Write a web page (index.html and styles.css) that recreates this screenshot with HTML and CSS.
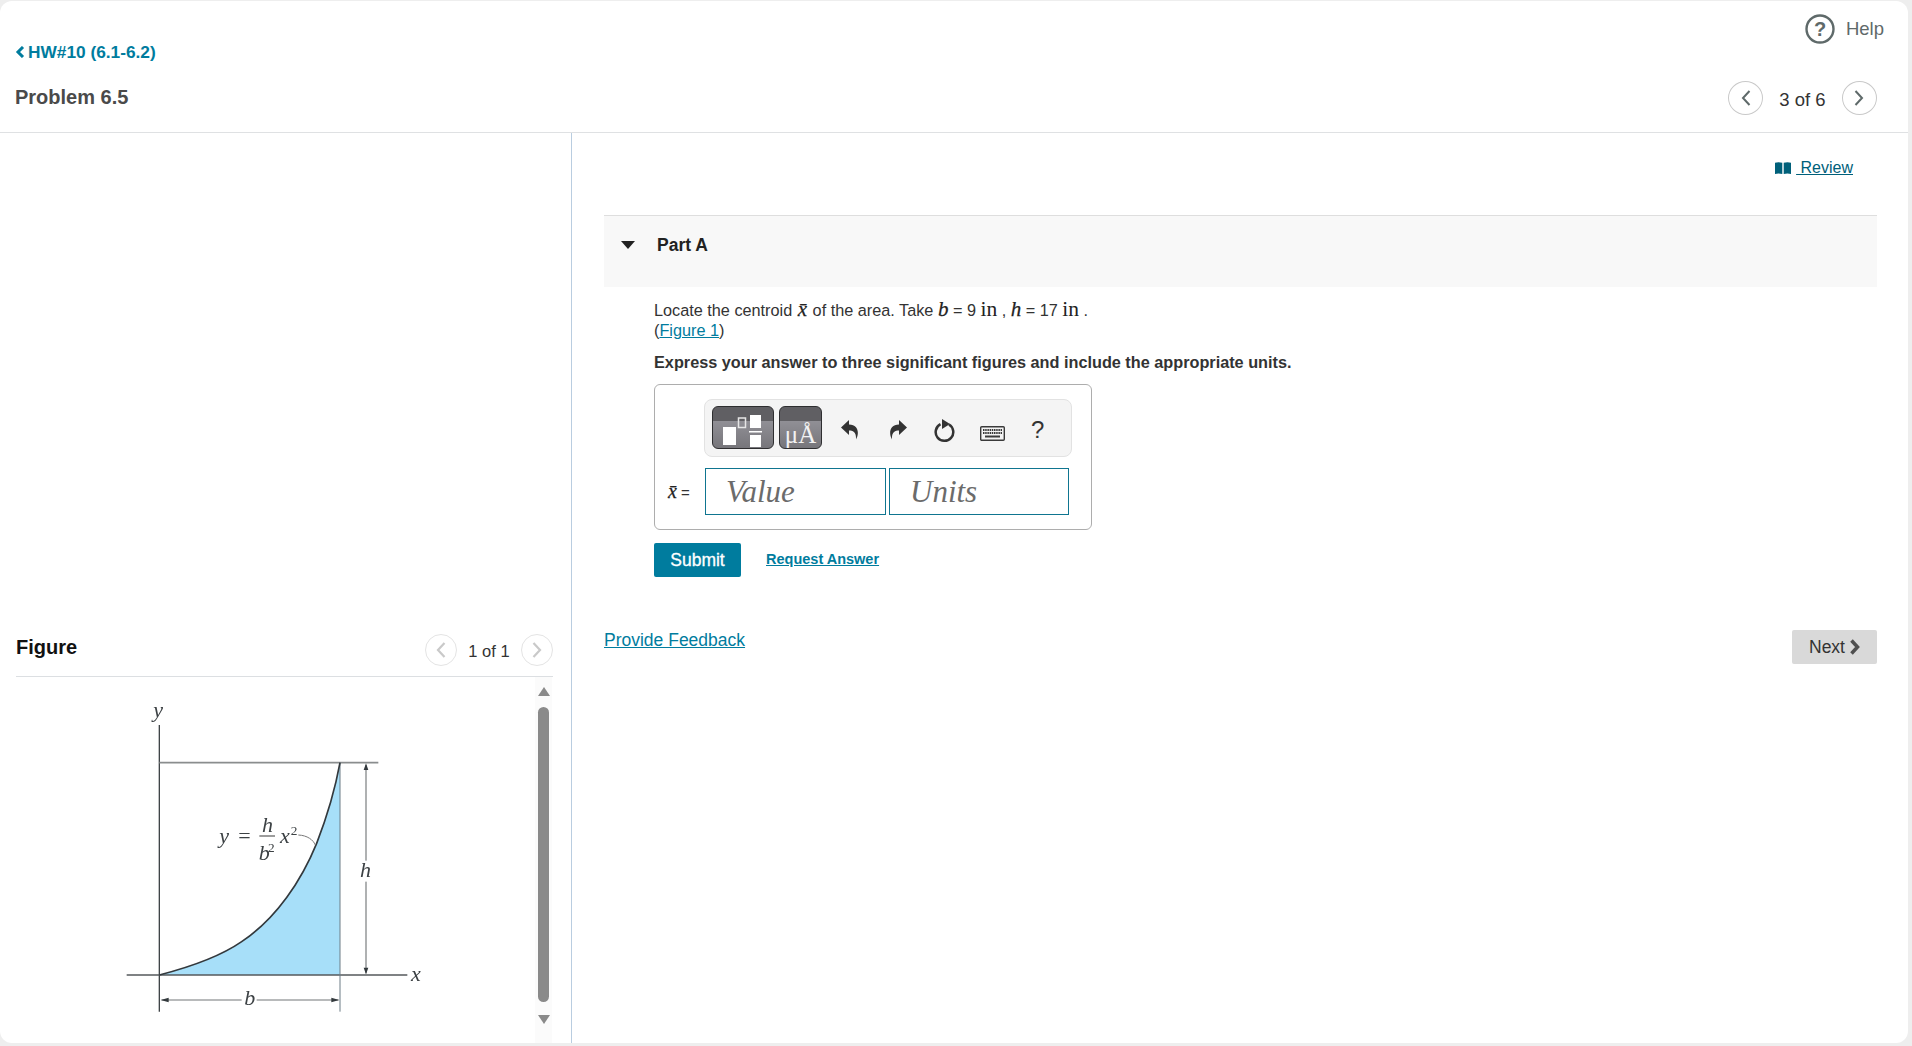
FILE: index.html
```html
<!DOCTYPE html>
<html lang="en">
<head>
<meta charset="utf-8">
<title>Problem 6.5</title>
<link rel="stylesheet" href="styles.css">
</head>
<body>
<main class="card">
  <header class="top">
    <div class="top-left">
      <a class="back" href="#"><svg class="back-chev" viewBox="0 0 10 12"><path d="M8 1 3 6l5 5" fill="none" stroke="currentColor" stroke-width="3"/></svg>HW#10 (6.1-6.2)</a>
      <h1 class="title">Problem 6.5</h1>
    </div>
    <div class="top-right">
      <a class="help" href="#"><svg class="help-icon" viewBox="0 0 30 30"><circle cx="15" cy="15" r="13.500" fill="none" stroke="#5f6a6a" stroke-width="2.400"/><text x="15" y="22" text-anchor="middle" class="help-q">?</text></svg><span>Help</span></a>
      <div class="pager main-pager">
        <button class="circle"><svg viewBox="0 0 12 18"><path d="M9.500 2 3 9l6.500 7" fill="none" stroke="#5f6a6a" stroke-width="2"/></svg></button>
        <span class="count">3 of 6</span>
        <button class="circle"><svg viewBox="0 0 12 18"><path d="M2.500 2 9 9l-6.500 7" fill="none" stroke="#5f6a6a" stroke-width="2"/></svg></button>
      </div>
    </div>
  </header>
  <div class="panes">
    <aside class="left">
      <div class="fig-head">
        <h2 class="fig-title">Figure</h2>
        <div class="pager fig-pager">
          <button class="circle dim"><svg viewBox="0 0 12 18"><path d="M9.500 2 3 9l6.500 7" fill="none" stroke="#c9c9c9" stroke-width="2.200"/></svg></button>
          <span class="count small">1 of 1</span>
          <button class="circle dim"><svg viewBox="0 0 12 18"><path d="M2.500 2 9 9l-6.500 7" fill="none" stroke="#c9c9c9" stroke-width="2.200"/></svg></button>
        </div>
      </div>
      <div class="fig-body">
        <svg class="diagram" viewBox="0 -30 960 990">
          <path d="M118 825C215 800 300 770 365 725 470 655 545 540 590 430 625 340 645 270 660 188V825Z" fill="#a7dff9"/>
          <g fill="none">
            <path d="M118 75V935" stroke="#3f4447" stroke-width="4"/>
            <path d="M118 188H775" stroke="#8a8d8e" stroke-width="5"/>
            <path d="M20 825H862" stroke="#55595b" stroke-width="5"/>
            <path d="M660 188V935" stroke="#6d7c86" stroke-width="3"/>
            <path d="M118 825C215 800 300 770 365 725 470 655 545 540 590 430 625 340 645 270 660 188" stroke="#33393d" stroke-width="5"/>
            <path d="M738 195V482M738 545V820" stroke="#3f4447" stroke-width="2.500"/>
            <path d="M125 900H365M410 900H655" stroke="#55595b" stroke-width="2.500"/>
            <path d="M535 405C562 406 580 420 586 435" stroke="#777" stroke-width="3"/>
            <path d="M418 408H465" stroke="#555" stroke-width="3.500"/>
          </g>
          <path d="M738 190 731 210H745ZM738 823 731 803H745ZM122 900 146 893V907ZM658 900 634 893V907Z" fill="#33393d"/>
          <g class="dg-text">
            <text x="100" y="50">y</text>
            <text x="298" y="430">y</text>
            <text x="355" y="430" class="dg-light">=</text>
            <text x="426" y="395">h</text>
            <text x="416" y="480">b</text>
            <text x="444" y="456" class="dg-sup">2</text>
            <text x="480" y="430">x</text>
            <text x="512" y="406" class="dg-sup">2</text>
            <text x="720" y="530">h</text>
            <text x="873" y="843">x</text>
            <text x="373" y="915">b</text>
          </g>
        </svg>
        <div class="scroll">
          <span class="arrow-up"></span>
          <span class="thumb"></span>
          <span class="arrow-down"></span>
        </div>
      </div>
    </aside>
    <section class="right">
      <div class="review-row">
        <a class="review" href="#"><svg class="book" viewBox="0 0 16 12"><path d="M0 .8C2 0 5 0 7.300 .8V12C5 11.200 2 11.200 0 12ZM8.700 .8C11 0 14 0 16 .8V12c-2-.8-5-.8-7.300 0Z" fill="#00607a"/></svg><span class="review-text"> Review</span></a>
      </div>
      <div class="part-head">
        <span class="caret"></span>
        <span class="part-title">Part A</span>
      </div>
      <div class="part-body">
        <p class="line">Locate the centroid <span class="m mx">x̄</span> of the area. Take <span class="m">b</span> = 9 <span class="u">in</span> , <span class="m">h</span> = 17 <span class="u">in</span> .</p>
        <p class="line">(<a class="link" href="#">Figure 1</a>)</p>
        <p class="instr">Express your answer to three significant figures and include the appropriate units.</p>
        <div class="answer">
          <div class="toolbar">
            <button class="tpl tpl-a"><svg viewBox="0 0 60 41"><rect x="10" y="20" width="13" height="18" fill="#fff"/><rect x="25.500" y="11" width="7" height="9.500" fill="none" stroke="#e6e6e6" stroke-width="1.500"/><rect x="37" y="8" width="11" height="13" fill="#fff"/><rect x="36" y="24" width="13" height="1.500" fill="#fff"/><rect x="37" y="28" width="11" height="12" fill="#fff"/></svg></button>
            <button class="tpl tpl-b"><span>μÅ</span></button>
            <svg class="tool t-undo" viewBox="0 0 18 20"><path d="M8 0 0 7.500 8 15v-4.500c4 0 7.500 1.500 7 9 3.500-6 2.500-15-7-15Z" fill="#333"/></svg>
            <svg class="tool t-redo" viewBox="0 0 18 20"><path d="M10 0 18 7.500 10 15v-4.500c-4 0-7.500 1.500-7 9C-.5 13.500.5 4.500 10 4.500Z" fill="#333"/></svg>
            <svg class="tool t-reset" viewBox="0 0 22 24"><path d="M15 5.500A8.800 8.800 0 1 1 6.500 5.200" fill="none" stroke="#333" stroke-width="2.500"/><path d="M8 0v10L16 5Z" fill="#333"/></svg>
            <svg class="tool t-keys" viewBox="0 0 25 15"><rect x=".7" y=".7" width="23.600" height="13.600" rx="1" fill="#f4f4f4" stroke="#3a3a3a" stroke-width="1.400"/><path d="M3 4h19M3 7h19" stroke="#3a3a3a" stroke-width="1.800" stroke-dasharray="1.500 .7"/><path d="M5 10.500h15" stroke="#3a3a3a" stroke-width="2"/></svg>
            <span class="t-help">?</span>
          </div>
          <div class="fields">
            <label class="lbl"><span class="m mlbl">x̄</span> =</label>
            <input class="inp inp-v" placeholder="Value">
            <input class="inp inp-u" placeholder="Units">
          </div>
        </div>
        <div class="actions">
          <button class="submit">Submit</button>
          <a class="req" href="#">Request Answer</a>
        </div>
      </div>
      <div class="foot">
        <a class="feedback" href="#">Provide Feedback</a>
        <button class="next">Next<svg class="next-chev" viewBox="0 0 11 16"><path d="M2.500 1.500 8.500 8l-6 6.500" fill="none" stroke="#4f4f4f" stroke-width="3.500"/></svg></button>
      </div>
    </section>
  </div>
</main>
</body>
</html>
```

FILE: styles.css
```css
* { box-sizing: border-box; }
html, body { margin: 0; height: 100%; }
body {
  background: #eeeeee;
  font-family: "Liberation Sans", Arial, sans-serif;
  color: #333;
  overflow: hidden;
  padding: 1px 4px 3px 0;
}
a { text-decoration: none; }
button { font-family: inherit; cursor: pointer; }
.card {
  background: #fff;
  height: 1042px;
  border-radius: 12px;
  display: flex;
  flex-direction: column;
  overflow: hidden;
}
.top {
  height: 132px;
  border-bottom: 1px solid #dfe1e3;
  display: flex;
  justify-content: space-between;
  flex: none;
}
.top-left { padding: 41px 0 0 15px; }
.back {
  display: flex;
  align-items: center;
  height: 20px;
  font-size: 17.300px;
  font-weight: 700;
  color: #007c9e;
}
.back-chev { width: 10px; height: 12px; margin-right: 3px; }
.title {
  margin: 23px 0 0 0;
  font-size: 20px;
  line-height: 24px;
  font-weight: 700;
  color: #4a4a4a;
}
.top-right {
  display: flex;
  flex-direction: column;
  align-items: flex-end;
  padding: 12px 24px 0 0;
  width: 300px;
}
.help {
  display: flex;
  align-items: center;
  gap: 11px;
  color: #5f6a6a;
  font-size: 18.500px;
  height: 32px;
}
.help-icon { width: 30px; height: 30px; }
.help-q { font: 700 20px "Liberation Sans", sans-serif; fill: #5f6a6a; }
.main-pager { margin: 36px 7px 0 auto; width: 149px; }
.pager { display: flex; align-items: center; justify-content: space-between; }
.circle {
  width: 35px;
  height: 34px;
  padding: 0;
  border: 1px solid #c9c9c9;
  border-radius: 50%;
  background: #fff;
  display: flex;
  align-items: center;
  justify-content: center;
}
.circle svg { width: 12px; height: 18px; }
.circle.dim { border-color: #e4e4e4; width: 32px; height: 32px; }
.count { font-size: 18.500px; color: #333; padding-top: 4px; }
.count.small { font-size: 16.500px; padding-top: 2px; }
.panes { flex: 1; display: flex; min-height: 0; }
.left {
  width: 572px;
  flex: none;
  border-right: 1px solid #b9cde0;
  display: flex;
  flex-direction: column;
  justify-content: flex-end;
  padding: 0 19px 0 16px;
}
.fig-head {
  height: 47px;
  border-bottom: 1px solid #dcdfe2;
  display: flex;
  justify-content: space-between;
  align-items: flex-start;
  margin-right: -1px;
}
.fig-title {
  margin: 5px 0 0 0;
  font-size: 20px;
  line-height: 24px;
  font-weight: 700;
  color: #111;
}
.fig-pager { width: 128px; margin-top: 4px; }
.fig-body {
  height: 366px;
  display: flex;
  justify-content: space-between;
}
.diagram { width: 320px; height: 330px; margin: 13px 0 0 104px; display: block; filter: blur(.35px); }
.dg-text text { font: italic 66px "Liberation Serif", serif; fill: #3c4144; }
.dg-text .dg-sup { font: 40px "Liberation Serif", serif; }
.dg-text .dg-light { font-style: normal; }
.scroll {
  width: 17px;
  background: #fbfbfb;
  display: flex;
  flex-direction: column;
  align-items: center;
  padding: 10px 0 0 0;
}
.arrow-up { width: 0; height: 0; border: 6.500px solid transparent; border-top: 0; border-bottom: 9px solid #8a8a8a; }
.thumb { width: 11px; height: 295px; margin: 11px 0 0 0; background: #8a8a8a; border-radius: 6px; }
.arrow-down { width: 0; height: 0; margin-top: 13px; border: 6.500px solid transparent; border-bottom: 0; border-top: 9px solid #8a8a8a; }
.right { flex: 1; padding: 0 31px 0 32px; min-width: 0; }
.review-row { height: 82px; padding: 25px 24px 0 0; display: flex; justify-content: flex-end; }
.review { display: flex; align-items: center; height: 20px; color: #00607a; font-size: 16px; }
.book { width: 16px; height: 12px; margin-right: 5px; }
.review-text { text-decoration: underline; white-space: pre; }
.part-head {
  height: 72px;
  border-top: 1px solid #dedede;
  background: #f8f8f8;
  display: flex;
  align-items: flex-start;
  padding: 17px 0 0 17px;
}
.caret {
  margin-top: 8px;
  width: 0;
  height: 0;
  border: 7.500px solid transparent;
  border-bottom: 0;
  border-top: 8px solid #222;
}
.part-title { margin-left: 22px; font-size: 17.500px; line-height: 24px; font-weight: 700; color: #222; }
.part-body { padding: 13px 0 0 50px; }
.line { margin: 0; font-size: 16.250px; line-height: 20px; color: #333; }
.m { font-family: "Liberation Serif", serif; font-style: italic; font-size: 21px; line-height: 18px; color: #222; -webkit-text-stroke: .25px #222; }
.mx { margin: 0 1px; }
.u { font-family: "Liberation Serif", serif; font-size: 21.500px; line-height: 18px; color: #222; }
.link { color: #007c9e; text-decoration: underline; }
.instr { margin: 12px 0 0 0; font-size: 16.250px; line-height: 20px; font-weight: 700; color: #333; }
.answer {
  margin-top: 12px;
  width: 438px;
  height: 146px;
  border: 1px solid #adadad;
  border-radius: 6px;
  padding: 14px 18px 0 49px;
}
.toolbar {
  width: 368px;
  height: 58px;
  background: #f4f4f4;
  border: 1px solid #e2e2e2;
  border-radius: 8px;
  display: flex;
  align-items: flex-start;
  padding: 6px 0 0 7px;
}
.tpl {
  padding: 0;
  height: 43px;
  border: 1px solid #2e2e30;
  border-radius: 6px;
  background: linear-gradient(#605f63 0, #605f63 33%, #908f95 35%, #77767b 100%);
}
.tpl-a { width: 62px; }
.tpl-a svg { width: 60px; height: 41px; display: block; }
.tpl-b {
  width: 43px;
  margin-left: 5px;
  color: #f2f2f2;
  font: 25px/26px "Liberation Serif", serif;
  display: flex;
  align-items: flex-end;
  justify-content: center;
  padding-bottom: 0;
}
.tool { flex: none; margin-top: 14px; }
.t-undo { width: 18px; height: 20px; margin-left: 19px; }
.t-redo { width: 18px; height: 20px; margin-left: 30px; }
.t-reset { width: 22px; height: 24px; margin-left: 27px; margin-top: 13px; }
.t-keys { width: 25px; height: 15px; margin-left: 24px; margin-top: 20px; }
.t-help { margin-left: 26px; margin-top: 10px; font-size: 24px; line-height: 28px; color: #333; }
.fields { display: flex; align-items: center; margin-top: 11px; margin-left: -36px; }
.lbl { width: 37px; font-size: 15px; color: #333; white-space: nowrap; }
.mlbl { font-size: 20px; }
.inp {
  height: 47px;
  border: 1px solid #0f7590;
  border-radius: 0;
  padding: 0 0 0 20px;
  font: italic 31px "Liberation Serif", serif;
  background: #fff;
  outline: none;
}
.inp::placeholder { color: #6b6b6b; opacity: 1; }
.inp-v { width: 181px; }
.inp-u { width: 180px; margin-left: 3px; }
.actions { display: flex; align-items: center; margin-top: 13px; }
.submit {
  width: 87px;
  height: 34px;
  border: 0;
  border-radius: 2px;
  background: #007c9e;
  color: #fff;
  font-size: 17.500px;
  font-weight: 400;
  -webkit-text-stroke: .3px #fff;
}
.req { margin: -2px 0 0 25px; font-size: 14.500px; font-weight: 700; color: #007c9e; text-decoration: underline; }
.foot { margin-top: 53px; display: flex; justify-content: space-between; align-items: flex-start; }
.feedback { font-size: 17.500px; line-height: 20px; color: #007c9e; text-decoration: underline; }
.next {
  width: 85px;
  height: 34px;
  border: 0;
  border-radius: 2px;
  background: #d9d9d9;
  color: #333;
  font-size: 17.500px;
  display: flex;
  align-items: center;
  justify-content: center;
  gap: 4px;
  padding: 0;
}
.next-chev { width: 11px; height: 16px; }
```
